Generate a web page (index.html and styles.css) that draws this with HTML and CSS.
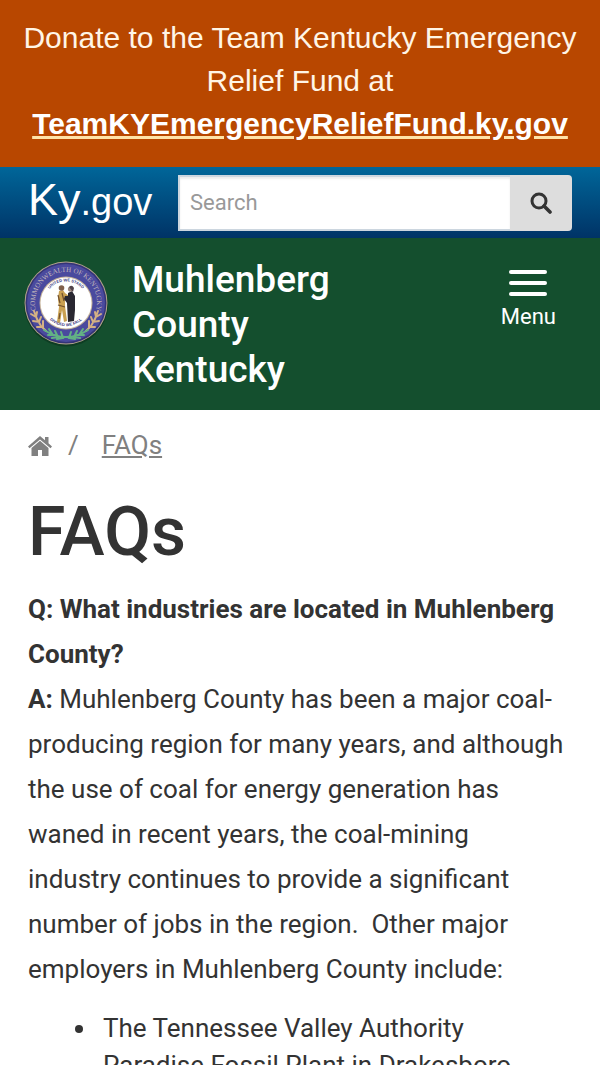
FILE: index.html
```html
<!DOCTYPE html>
<html lang="en">
<head>
    <meta charset="UTF-8">
    <meta name="viewport" content="width=device-width, initial-scale=1.0">
    <title>FAQs - Muhlenberg County Kentucky</title>
    <link rel="stylesheet" href="styles.css">
</head>
<body>
    <div class="alert">
        Donate to the Team Kentucky Emergency Relief Fund at <a href="#">TeamKYEmergencyReliefFund.ky.gov</a>
    </div>

    <div class="topbar">
        <a class="kygov" href="#">Ky<span>.gov</span></a>
        <form class="search">
            <input type="text" placeholder="Search" aria-label="Search">
            <button type="submit" aria-label="Submit search">
                <svg viewBox="0 0 22 22" width="22" height="22">
                    <circle cx="9" cy="9" r="7" fill="none" stroke="#333" stroke-width="3"/>
                    <path d="M14 14l6 6" stroke="#333" stroke-width="3.6" stroke-linecap="round"/>
                </svg>
            </button>
        </form>
    </div>

    <header class="header">
        <a class="seal" href="#" aria-label="Home">
            <svg viewBox="0 0 88 88" width="88" height="88">
                <defs>
                    <path id="ring" d="M17.6 60A31 31 0 1 1 70.4 60"/>
                    <path id="stand" d="M24 36A21.500 21.500 0 0 1 64 36"/>
                    <path id="fall" d="M27 60A24 24 0 0 0 61 60"/>
                </defs>
                <circle cx="44" cy="45.500" r="42" fill="#0b351f" opacity=".7"/>
                <circle cx="44" cy="44" r="41.500" fill="#b5a58c"/>
                <circle cx="44" cy="44" r="40.500" fill="#343477"/>
                <circle cx="44" cy="44" r="39" fill="#4a4a9e"/>
                <circle cx="44" cy="44" r="26.500" fill="#c5b39b"/>
                <circle cx="44" cy="44" r="25.500" fill="#fff"/>
                <text class="ring-text"><textPath href="#ring" startOffset="50%">COMMONWEALTH OF KENTUCKY</textPath></text>
                <text class="motto"><textPath href="#stand" startOffset="50%">UNITED WE STAND</textPath></text>
                <text class="motto"><textPath href="#fall" startOffset="50%">DIVIDED WE FALL</textPath></text>
                <!-- goldenrod on both sides -->
                <g fill="none" stroke="#d3b184" stroke-width="2" stroke-linecap="round">
                    <path d="M12 52l3 8 4 7 5 5M9 55l5 3 1-5M11 62l6 1 2-5M15 68l6 0 0-6"/>
                    <path d="M76 52l-3 8-4 7-5 5M79 55l-5 3-1-5M77 62l-6 1-2-5M73 68l-6 0 0-6"/>
                </g>
                <!-- green wreath -->
                <g fill="none" stroke="#62b184" stroke-width="2" stroke-linecap="round">
                    <path d="M22 71q22 14 44 0M27 70l4 6-5 0M33 72l3 6-6 1M39 73l2 6-6 1M61 70l-4 6 5 0M55 72l-3 6 6 1M49 73l-2 6 6 1"/>
                </g>
                <!-- frontiersman and statesman -->
                <path d="M37 32l4-1 2 3 4 3-1 2-3 0 0 8 2 15-3 1-2-12-2 13-3-1 2-15-1-8z" fill="#c9a052"/>
                <path d="M36 36l2 8M40 34l2 8M36 46l7 2M38 54l-1 6" stroke="#71502d" stroke-width="1.200" fill="none"/>
                <circle cx="39.500" cy="29" r="2.800" fill="#80604b"/>
                <path d="M46 34l4-2 3 5 0 14-1 11-6 1-1-19-3-4 1-3 3 0z" fill="#292731"/>
                <circle cx="48.500" cy="30" r="2.600" fill="#9a847a"/>
                <path d="M47 28q3-3 5 1l-1 4z" fill="#51434a"/>
            </svg>
        </a>
        <div class="site-name">Muhlenberg County Kentucky</div>
        <button class="menu" type="button">
            <i></i>
            <i></i>
            <i></i>
            Menu
        </button>
    </header>

    <main class="content">
        <nav class="breadcrumb">
            <a href="#" aria-label="Home">
                <svg viewBox="0 0 24 20" width="24" height="20">
                    <path d="M12 0l5 4.200V1h3.500v6.300L24 10.500l-1.500 1.800L12 3.500 1.500 12.300 0 10.500z" fill="#808080"/>
                    <path d="M12 4.800l8.500 7.200V20H14v-6h-4v6H3.500v-8z" fill="#808080"/>
                </svg>
            </a>
            <span>/</span>
            <a href="#">FAQs</a>
        </nav>
        <h1>FAQs</h1>
        <p>
            <strong>Q: What industries are located in Muhlenberg County?</strong><br>
            <strong>A:</strong> Muhlenberg County has been a major coal-producing region for many years, and although the use of coal for energy generation has waned in recent years, the coal-mining industry continues to provide a significant number of jobs in the region.&nbsp; Other major employers in Muhlenberg County include:
        </p>
        <ul>
            <li>The Tennessee Valley Authority Paradise Fossil Plant in Drakesboro</li>
        </ul>
    </main>
</body>
</html>
```

FILE: styles.css
```css
*{
    box-sizing: border-box;
}
body{
    margin: 0;
    font-family: Roboto, "Liberation Sans", sans-serif;
    font-size: 26px;
    color: #333;
    background-color: #fff;
}
.alert{
    padding: 16px 15px 22px;
    background-color: #b84700;
    color: #fff5e6;
    font: 30px/43px "Liberation Sans", Arial, sans-serif;
    text-align: center;
}
.alert a{
    color: #fff;
    font-weight: bold;
    text-decoration: underline #ffe3a8;
}
.topbar{
    display: flex;
    align-items: center;
    height: 71px;
    padding: 0 28px;
    background: linear-gradient(#006699, #003366);
}
.kygov{
    width: 150px;
    flex-shrink: 0;
    padding-bottom: 4px;
    color: #fff;
    font: 45px/52px "Liberation Sans", Arial, sans-serif;
    text-decoration: none;
}
.kygov span{
    font-size: 38px;
}
.search{
    display: flex;
    flex: 1;
    height: 56px;
}
.search input{
    flex: 1;
    min-width: 0;
    padding: 0 10px;
    border: 2px solid #ccd6df;
    border-right: 0;
    border-radius: 0;
    box-shadow: inset 0 2px 2px rgba(0,0,0,.08);
    font: 22px Roboto, sans-serif;
}
.search input::placeholder{
    color: #999;
}
.search button{
    display: flex;
    align-items: center;
    justify-content: center;
    width: 62px;
    padding: 0;
    border: 0;
    border-radius: 0 4px 4px 0;
    background-color: #ddd;
}
.header{
    display: flex;
    align-items: flex-start;
    padding: 19px 28px 18px 22px;
    background-color: #144f2e;
    color: #fff;
}
.seal{
    flex-shrink: 0;
    margin-top: 2px;
}
.seal svg{
    display: block;
}
.ring-text{
    fill: #c3b8bb;
    font: 7px "Liberation Serif", serif;
    text-anchor: middle;
}
.motto{
    fill: #34347e;
    font: bold 4px "Liberation Sans", sans-serif;
    text-anchor: middle;
}
.site-name{
    width: 240px;
    margin-left: 22px;
    font-size: 37px;
    font-weight: 500;
    line-height: 45px;
}
.menu{
    display: flex;
    flex-direction: column;
    align-items: center;
    gap: 7px;
    margin: 13px 0 0 auto;
    padding: 0 16px;
    border: 0;
    background: none;
    color: #fff;
    font: 22px/28px Roboto, sans-serif;
}
.menu i{
    width: 38px;
    height: 4px;
    border-radius: 2px;
    background-color: #fff;
}
.content{
    padding: 17px 34px 16px 28px;
}
.breadcrumb{
    display: flex;
    align-items: center;
    line-height: 37px;
    color: #808080;
}
.breadcrumb a{
    color: #808080;
}
.breadcrumb svg{
    display: block;
}
.breadcrumb span{
    margin: 0 23px 0 16px;
}
h1{
    margin: 30px 0 17px;
    font-size: 68px;
    font-weight: 500;
    line-height: 76px;
}
p{
    margin: 0 0 18px;
    line-height: 45px;
}
ul{
    margin: 0;
    padding-left: 70px;
    line-height: 37px;
}
li{
    padding-left: 5px;
}
```
